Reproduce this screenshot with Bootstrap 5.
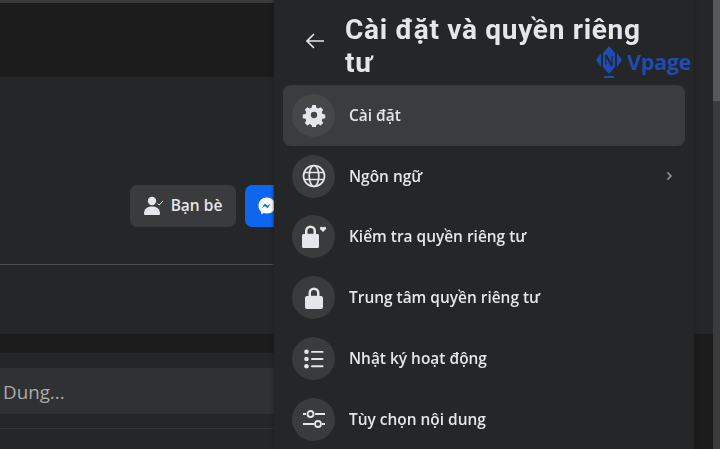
<!DOCTYPE html>
<html lang="vi">
<head>
<meta charset="utf-8">
<link href="https://cdn.jsdelivr.net/npm/bootstrap@5.3.0/dist/css/bootstrap.min.css" rel="stylesheet">
<style>
html,body{height:449px;overflow:hidden;background:#1c1c1c;font-family:"Open Sans","Noto Sans",sans-serif}
.stage{height:449px;width:720px;overflow:hidden;filter:blur(.35px)}
.left{width:274px;flex:none;overflow:hidden}
.strip{height:3px;background:#3a3b3c}
.dark{background:#1c1c1d}
.panel{background:#252627}
.d74{height:74px}.d19{height:19px}
.p-top{height:188px;padding-top:108px;border-bottom:1px solid #4c4d4e}
.p-mid{height:69px}
.friend{width:106px;height:42px;background:#3a3b3c;color:#e4e6eb;font-size:15.500px;font-weight:600;border-radius:7px;margin-left:130px;flex:none;border:0;padding:0;gap:7px}
.msg{width:60px;height:42px;background:#0d66f0;border-radius:7px;margin-left:9px;flex:none;padding:0 0 0 13px;border:0}
.p-in{height:76px;padding-top:15px;border-bottom:1px solid #343536}
.field{height:46px;background:#303132;color:#a8aaad;font-size:18.800px;padding-left:3px;line-height:48px}
.menu{width:420px;flex:none;background:#252627;padding:0 9px;position:relative;box-shadow:0 0 3px #1a1a1a}
.head{height:85px;padding-left:21px}
.back{width:41px;flex:none;padding-top:27px}
.title{color:#e4e6eb;font-family:Roboto,"Open Sans",sans-serif;font-size:28px;font-weight:700;line-height:33px;padding:12.500px 0 0 0;margin:0;letter-spacing:.7px}
.list-group-item.row-i{background:transparent;border:0;height:60.800px;padding:0 9px;color:#e4e6eb;font-size:15.450px;font-weight:600;border-radius:8px;gap:14px}
.list-group-item.row-i.on{background:#3b3c3d}
.ic{width:43px;height:43px;border-radius:50%;background:#3a3b3c;flex:none}
.on .ic{background:#464748}
.chev{margin-left:auto;margin-right:3px}
.wm{position:absolute;left:322px;top:45.500px;color:#1f4db5;font-size:21.500px;font-weight:700;gap:5px;letter-spacing:-.3px;line-height:26px}
.gutter{width:19px;flex:none}
.g1{height:334px}
.g2{height:115px}
.sb{width:7px;flex:none;background:#3a3b3c}
.thumb{height:101px;background:#565758}
</style>
</head>
<body>
<div class="stage d-flex">
  <div class="left d-flex flex-column">
    <div class="strip"></div>
    <div class="dark d74"></div>
    <div class="panel p-top">
      <div class="d-flex">
        <button class="friend d-flex align-items-center justify-content-center">
          <svg width="20" height="20" viewBox="0 0 20 20" fill="#e4e6eb"><circle cx="8" cy="5" r="4.200"/><path d="M0 17.500c0-4.500 3.200-7 8-7s8 2.500 8 7c0 1-.5 1.500-1.500 1.500h-13C.5 19 0 18.500 0 17.500z"/><path d="M13.500 7.500l1.600 1.500L19 5" fill="none" stroke="#e4e6eb" stroke-width="1"/></svg>
          <span>Bạn bè</span>
        </button>
        <div class="msg d-flex align-items-center">
          <svg width="18" height="18" viewBox="0 0 18 18"><path fill="#fff" d="M9 .5C4.200.5.500 4 .500 8.700c0 2.500 1 4.600 2.700 6.100v2.700l2.600-1.400c1 .3 2 .4 3.200.4 4.800 0 8.500-3.500 8.500-7.800S13.800.5 9 .5z"/><path fill="#0d66f0" d="M3.900 11.200l2.900-4.600 2.700 2.100 3.100-2.100-2.900 4.600-2.700-2.100z"/></svg>
        </div>
      </div>
    </div>
    <div class="panel p-mid"></div>
    <div class="dark d19"></div>
    <div class="panel p-in"><div class="field">Dung...</div></div>
    <div class="panel flex-grow-1"></div>
  </div>

  <div class="menu">
    <div class="head d-flex">
      <div class="back"><svg width="22" height="22" viewBox="0 0 22 22" fill="none" stroke="#e4e6eb" stroke-width="1.700"><path d="M20 11H3M10 4l-7 7 7 7"/></svg></div>
      <h1 class="title"><span class="d-table">Cài đặt và quyền riêng</span><span class="d-table">tư</span></h1>
    </div>
    <div class="wm d-flex align-items-center">
      <svg width="26" height="33" viewBox="0 0 26 33"><path fill="#1f4db5" d="M13 0l6 7v14l-6 7-6-7V7z"/><path fill="#1f4db5" d="M5 7l-5 7 5 7zM21 7l5 7-5 7z"/><path fill="#252627" d="M10.500 8l5 9V9.500l1.200 1v9l-1.200 1.500-5-9v7.500l-1.200-1.500v-8.500z"/><rect x="8" y="30" width="10" height="2" fill="#1f4db5"/></svg>
      <span>Vpage</span>
    </div>
    <div class="list-group">
      <a class="list-group-item row-i on d-flex align-items-center"><span class="ic d-flex align-items-center justify-content-center">
        <svg width="24" height="24" viewBox="0 0 24 24" fill="#e4e6eb"><path fill-rule="evenodd" d="M10 1h4l.7 3 2 .9 2.700-1.600 2.800 2.800-1.600 2.700.9 2 3 .7v4l-3 .7-.9 2 1.600 2.700-2.800 2.800-2.700-1.600-2 .9-.7 3h-4l-.7-3-2-.9-2.700 1.600-2.800-2.800 1.600-2.700-.9-2-3-.7v-4l3-.7.9-2-1.600-2.700 2.800-2.800 2.700 1.600 2-.9zM12 8.500a3.500 3.500 0 1 0 0 7 3.500 3.500 0 0 0 0-7z" transform="translate(1.200 1.200) scale(.9)"/></svg>
      </span><span>Cài đặt</span></a>
      <a class="list-group-item row-i d-flex align-items-center"><span class="ic d-flex align-items-center justify-content-center">
        <svg width="24" height="24" viewBox="0 0 24 24" fill="none" stroke="#e4e6eb" stroke-width="1.700"><circle cx="12" cy="12" r="10.500"/><ellipse cx="12" cy="12" rx="4.800" ry="10.500"/><path d="M2.500 8.500h19M2.500 15.500h19"/></svg>
      </span><span>Ngôn ngữ</span>
        <svg class="chev" width="7" height="10" viewBox="0 0 7 10" fill="none" stroke="#9a9b9d" stroke-width="1.500"><path d="M1.500 1.500L5 5 1.500 8.500"/></svg></a>
      <a class="list-group-item row-i d-flex align-items-center"><span class="ic d-flex align-items-center justify-content-center">
        <svg width="26" height="26" viewBox="0 0 26 26" fill="#e4e6eb"><path fill-rule="evenodd" d="M2.500 10H4V7a5.500 5.500 0 0 1 11 0v3h1.500a1.500 1.500 0 0 1 1.500 1.500v11a1.500 1.500 0 0 1-1.500 1.500h-14A1.500 1.500 0 0 1 1 22.500v-11A1.500 1.500 0 0 1 2.500 10zm4-.2h6V7a3 3 0 0 0-6 0z"/><path d="M22 8l-2.800-2.800c-1.400-1.700 1.400-3.500 2.800-1.700 1.400-1.800 4.200 0 2.800 1.700z"/></svg>
      </span><span>Kiểm tra quyền riêng tư</span></a>
      <a class="list-group-item row-i d-flex align-items-center"><span class="ic d-flex align-items-center justify-content-center">
        <svg width="20" height="24" viewBox="0 0 20 24" fill="#e4e6eb"><path fill-rule="evenodd" d="M3 10h1.500V7a5.500 5.500 0 0 1 11 0v3H17a2 2 0 0 1 2 2v9a2 2 0 0 1-2 2H3a2 2 0 0 1-2-2v-9a2 2 0 0 1 2-2zm4-.2h6V7a3 3 0 0 0-6 0z"/></svg>
      </span><span>Trung tâm quyền riêng tư</span></a>
      <a class="list-group-item row-i d-flex align-items-center"><span class="ic d-flex align-items-center justify-content-center">
        <svg width="20" height="20" viewBox="0 0 20 20" fill="#e4e6eb"><circle cx="2.500" cy="2.800" r="2.300"/><circle cx="2.500" cy="10" r="2.300"/><circle cx="2.500" cy="17.200" r="2.300"/><rect x="7" y="1.900" width="12.500" height="1.900" rx=".9"/><rect x="7" y="9.100" width="12.500" height="1.900" rx=".9"/><rect x="7" y="16.300" width="12.500" height="1.900" rx=".9"/></svg>
      </span><span>Nhật ký hoạt động</span></a>
      <a class="list-group-item row-i d-flex align-items-center"><span class="ic d-flex align-items-center justify-content-center">
        <svg width="24" height="20" viewBox="0 0 24 20" fill="none" stroke="#e4e6eb" stroke-width="1.800"><path d="M1 5h3M13 5h10M1 15h11M20 15h3"/><circle cx="8.500" cy="5" r="3"/><circle cx="16" cy="15" r="3"/></svg>
      </span><span>Tùy chọn nội dung</span></a>
    </div>
  </div>

  <div class="gutter d-flex flex-column">
    <div class="panel g1"></div>
    <div class="dark g2"></div>
  </div>
  <div class="sb"><div class="thumb"></div></div>
</div>
</body>
</html>
